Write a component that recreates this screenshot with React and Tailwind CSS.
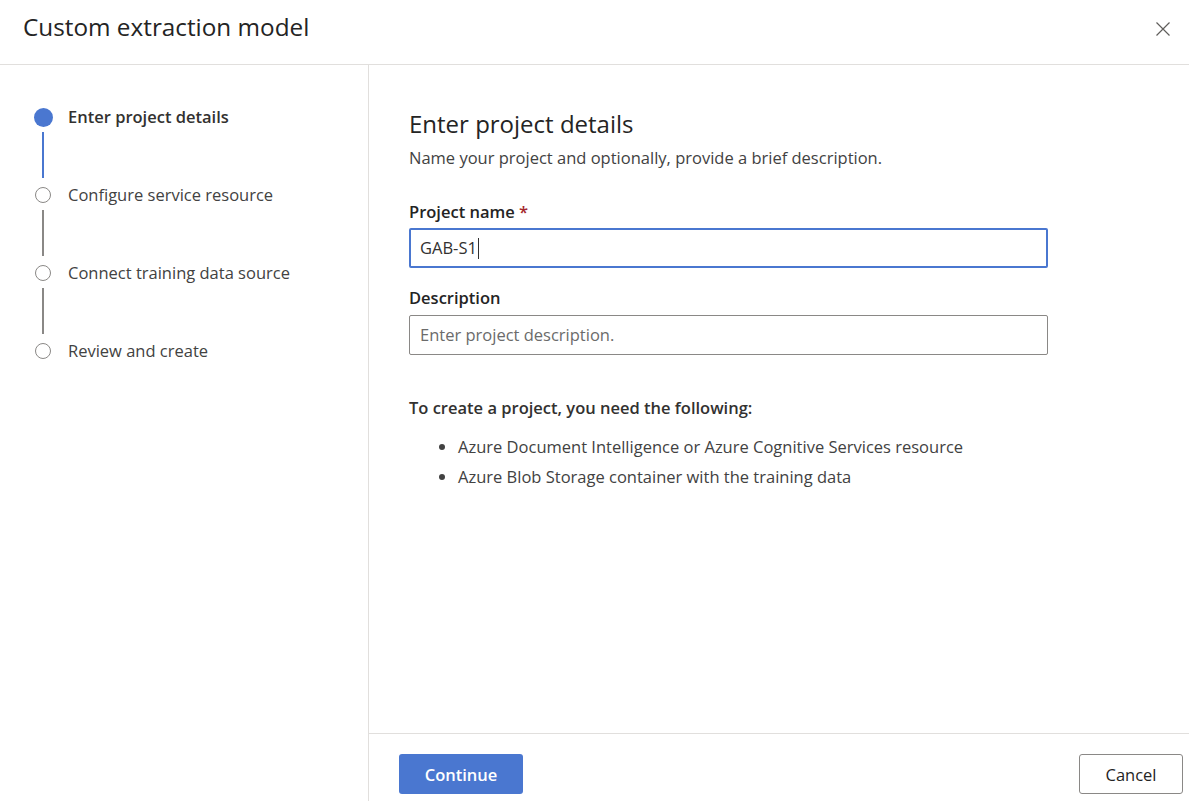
import React from 'react';

const steps = [
  'Enter project details',
  'Configure service resource',
  'Connect training data source',
  'Review and create',
];

const font = { fontFamily: '"Open Sans", "Noto Sans", sans-serif' };

function StepList() {
  return (
    <div className="pl-[33px] pt-[42px]">
      {steps.map((label, i) => {
        const active = i === 0;
        const last = i === steps.length - 1;
        return (
          <div key={label} className="flex">
            <div className="flex w-[20px] flex-col items-center">
              <div className="flex h-[20px] items-center justify-center">
                {active ? (
                  <div className="h-[19px] w-[19px] rounded-full bg-[#4a77d0]" />
                ) : (
                  <div className="h-[16px] w-[16px] rounded-full border-[1.5px] border-[#8a8886] bg-white" />
                )}
              </div>
              {!last && (
                <div
                  className={
                    active
                      ? 'mb-[7px] mt-[5px] h-[46px] w-[2px] bg-[#4a77d0]'
                      : 'mb-[7px] mt-[5px] h-[46px] w-[2px] bg-[#8a8886]'
                  }
                />
              )}
            </div>
            <div
              className={
                active
                  ? 'ml-[15px] text-[16.5px] font-semibold leading-[20px] text-[#323130]'
                  : 'ml-[15px] text-[16.5px] leading-[20px] text-[#424242]'
              }
            >
              {label}
            </div>
          </div>
        );
      })}
    </div>
  );
}

export default function App() {
  return (
    <div className="flex h-screen w-full flex-col bg-white text-[#323130]" style={font}>
      {/* header */}
      <div className="flex h-[65px] shrink-0 items-center justify-between border-b border-[#e1dfdd] pl-[23px] pr-[14px]">
        <h1 className="-mt-[9px] text-[24.3px] leading-none text-[#242424]">Custom extraction model</h1>
        <button className="-mt-[6px] p-1 text-[#605e5c]" aria-label="Close">
          <svg width="16" height="16" viewBox="0 0 16 16" fill="none" stroke="currentColor" strokeWidth="1.2">
            <path d="M1.5 1.5 L14.5 14.5 M14.5 1.5 L1.5 14.5" />
          </svg>
        </button>
      </div>

      <div className="flex min-h-0 flex-1">
        <div className="w-[369px] shrink-0 border-r border-[#e1dfdd]">
          <StepList />
        </div>

        <div className="flex min-w-0 flex-1 flex-col">
          <div className="flex-1 pl-[40px] pr-[141px] pt-[44px]">
            <h2 className="text-[24px] font-medium leading-[30px] text-[#242424]">Enter project details</h2>
            <p className="mt-[9px] text-[16.5px] leading-[20px] text-[#424242]">
              Name your project and optionally, provide a brief description.
            </p>

            <label className="mt-[34px] block text-[16.5px] font-semibold leading-[20px] text-[#242424]">
              Project name <span className="text-[#a4262c]">*</span>
            </label>
            <div className="mt-[6px] flex h-[40px] items-center rounded-[2px] border-2 border-[#4a77d0] px-[9px] text-[16.5px] text-[#323130]">
              GAB-S1
              <span className="ml-[1px] inline-block h-[21px] w-[1px] bg-[#323130]" />
            </div>

            <label className="mt-[20px] block text-[16.5px] font-semibold leading-[20px] text-[#242424]">
              Description
            </label>
            <div className="mt-[7px] flex h-[40px] items-center rounded-[2px] border border-[#8a8886] px-[10px] text-[16.5px] text-[#6b6b6b]">
              Enter project description.
            </div>

            <p className="mt-[43px] text-[16.5px] font-semibold leading-[20px] text-[#323130]">
              To create a project, you need the following:
            </p>
            <ul className="mt-[14px] list-disc pl-[49px] text-[16.5px] leading-[30px] text-[#424242]">
              <li>Azure Document Intelligence or Azure Cognitive Services resource</li>
              <li>Azure Blob Storage container with the training data</li>
            </ul>
          </div>

          <div className="flex h-[68px] shrink-0 items-start justify-between border-t border-[#e1dfdd] pl-[30px] pr-[6px] pt-[20px]">
            <button className="h-[40px] w-[124px] rounded-[3px] bg-[#4a77d0] pt-[2px] text-[16.5px] font-semibold text-white">
              Continue
            </button>
            <button className="h-[40px] w-[104px] rounded-[3px] border border-[#8a8886] bg-white pt-[2px] text-[16.5px] text-[#242424]">
              Cancel
            </button>
          </div>
        </div>
      </div>
    </div>
  );
}
